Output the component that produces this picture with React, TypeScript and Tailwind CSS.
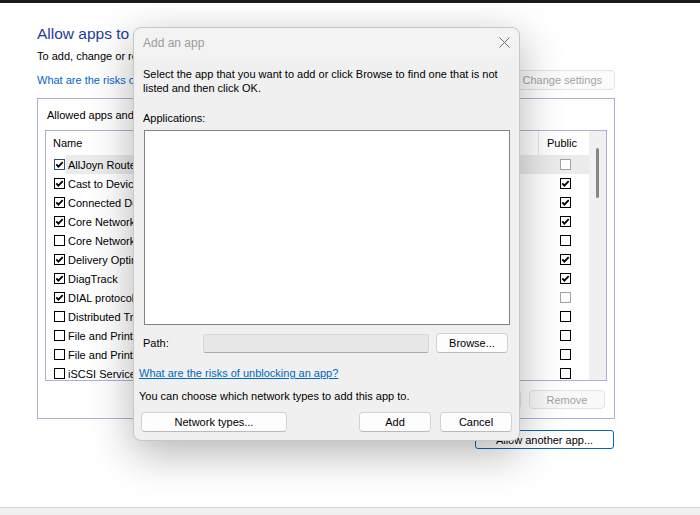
import React from "react";

type Row = { name: string; on: boolean; priv: boolean; pub: "on" | "off" | "dim" };

const rows: Row[] = [
  { name: "AllJoyn Router", on: true, priv: true, pub: "dim" },
  { name: "Cast to Device functionality", on: true, priv: true, pub: "on" },
  { name: "Connected Devices Platform", on: true, priv: true, pub: "on" },
  { name: "Core Networking", on: true, priv: true, pub: "on" },
  { name: "Core Networking Diagnostics", on: false, priv: false, pub: "off" },
  { name: "Delivery Optimization", on: true, priv: true, pub: "on" },
  { name: "DiagTrack", on: true, priv: true, pub: "on" },
  { name: "DIAL protocol server", on: true, priv: true, pub: "dim" },
  { name: "Distributed Transaction Coordinator", on: false, priv: false, pub: "off" },
  { name: "File and Printer Sharing", on: false, priv: false, pub: "off" },
  { name: "File and Printer Sharing over SMBDirect", on: false, priv: false, pub: "off" },
  { name: "iSCSI Service", on: false, priv: false, pub: "off" },
];

function Box({ on, tone = "#000" }: { on: boolean; tone?: string }) {
  return (
    <svg width="11" height="11" viewBox="0 0 11 11" className="shrink-0">
      <rect x="0.5" y="0.5" width="10" height="10" fill="#fff" stroke={tone} />
      {on && <path d="M2.3 5.4l2.1 2.3 4.3-4.6" fill="none" stroke="#000" strokeWidth="1.8" />}
    </svg>
  );
}

function Btn({ children, className = "" }: { children: React.ReactNode; className?: string }) {
  return (
    <button
      className={`flex h-[20px] items-center justify-center rounded-[4px] border border-[#d2d2d2] border-b-[#bababa] bg-[#fdfdfd] text-black ${className}`}
    >
      {children}
    </button>
  );
}

function AddAppDialog() {
  return (
    <div className="absolute left-[133px] top-[27px] flex h-[414px] w-[387px] flex-col rounded-[8px] border border-[#c6c6c6] bg-[#f0f0f0] shadow-[0_12px_44px_rgba(0,0,0,0.3)]">
      <div className="flex h-[29px] shrink-0 items-center justify-between rounded-t-[8px] bg-[#f3f3f3] px-[9px]">
        <span className="text-[12px] text-[#9c9c9c]">Add an app</span>
        <svg width="11" height="11" viewBox="0 0 11 11">
          <path d="M0.5 0.5l10 10M10.5 0.5l-10 10" stroke="#707070" strokeWidth="1" />
        </svg>
      </div>
      <div className="pt-[10px]">
        <p className="ml-[9px] w-[365px]">
          Select the app that you want to add or click Browse to find one that is not listed and then click OK.
        </p>
        <p className="ml-[9px] mt-[16px]">Applications:</p>
        <div className="ml-[10px] mt-[5px] h-[195px] w-[366px] border border-[#828282] bg-white" />
        <div className="ml-[9px] mt-[8px] flex h-[20px] items-center">
          <span className="w-[60px]">Path:</span>
          <div className="h-[19px] w-[226px] rounded-[3px] border border-[#d8d8d8] border-b-[#a9a9a9] bg-[#e7e7e7]" />
          <Btn className="ml-[7px] w-[72px]">Browse...</Btn>
        </div>
        <a className="ml-[5px] mt-[13px] block w-fit text-[#0067c0] underline">
          What are the risks of unblocking an app?
        </a>
        <p className="ml-[5px] mt-[9px]">You can choose which network types to add this app to.</p>
        <div className="mt-[9px] flex px-[7px]">
          <Btn className="w-[146px]">Network types...</Btn>
          <Btn className="ml-auto w-[72px]">Add</Btn>
          <Btn className="ml-[9px] w-[72px]">Cancel</Btn>
        </div>
      </div>
    </div>
  );
}

export default function App() {
  return (
    <div className="relative flex h-[515px] w-[700px] flex-col overflow-hidden bg-white font-['Liberation_Sans',Arial,sans-serif] text-[11px] leading-[14px] text-black">
      <div className="h-[3px] shrink-0 bg-[#1b1b1b]" />

      <div className="flex-1 pl-[37px] pr-[85px] pt-[21px]">
        <h1 className="whitespace-nowrap text-[15.5px] leading-[20px] text-[#1f3c99]">
          Allow apps to communicate through Windows Defender Firewall
        </h1>
        <p className="mt-[5px] whitespace-nowrap">
          To add, change or remove allowed apps and ports, click Change settings.
        </p>
        <div className="mt-[7px] flex h-[20px] items-center justify-between">
          <a className="whitespace-nowrap text-[#0066cc]">What are the risks of allowing an app to communicate?</a>
          <button className="flex h-[20px] items-center gap-[5px] rounded-[4px] border border-[#e3e3e3] bg-[#fbfbfb] px-[12px] text-[#a3a3a3]">
            <svg width="12" height="13" viewBox="0 0 12 13">
              <path d="M6 0.5L11 2.5V6.5C11 9.5 8.5 11.5 6 12.5C3.5 11.5 1 9.5 1 6.5V2.5Z" fill="#c9c9c9" />
            </svg>
            Change settings
          </button>
        </div>

        <div className="mt-[8px] h-[321px] border border-[#aeaedc] px-[7px] pt-[9px]">
          <p className="ml-[2px]">Allowed apps and features:</p>
          <div className="mt-[8px] flex h-[251px] overflow-hidden border border-[#aeaedc] bg-white">
            <div className="flex w-[543px] flex-col">
              <div className="grid h-[24px] shrink-0 grid-cols-[430px_63px_50px]">
                <div className="flex items-center border-r border-[#e5e5e5] pl-[7px]">Name</div>
                <div className="flex items-center border-r border-[#e5e5e5] pl-[8px]">Private</div>
                <div className="flex items-center pl-[8px]">Public</div>
              </div>
              {rows.map((r, i) => (
                <div key={r.name} className="flex h-[19px] shrink-0">
                  <div className="flex w-[20px] items-center pl-[8px]">
                    <Box on={r.on} tone={i === 0 ? "#2d4f86" : "#000"} />
                  </div>
                  <div
                    className={`grid flex-1 grid-cols-[410px_63px_50px] items-center ${i === 0 ? "bg-[#ebebeb]" : ""}`}
                  >
                    <span className="overflow-hidden whitespace-nowrap pl-[2px]">{r.name}</span>
                    <span className="flex justify-center">
                      <Box on={r.priv} />
                    </span>
                    <span className="flex justify-center pl-[3px]">
                      <Box on={r.pub === "on"} tone={r.pub === "dim" ? "#a3a3a3" : "#000"} />
                    </span>
                  </div>
                </div>
              ))}
            </div>
            <div className="w-[17px] shrink-0 bg-[#f0f0f0] pt-[17px]">
              <div className="mx-auto h-[50px] w-[3px] rounded-full bg-[#878787]" />
            </div>
          </div>
          <div className="mt-[9px] flex justify-end gap-[8px] pr-[2px]">
            <button className="h-[19px] w-[76px] rounded-[4px] border border-[#e3e3e3] bg-[#f9f9f9] text-[#a3a3a3]">
              Details...
            </button>
            <button className="h-[19px] w-[76px] rounded-[4px] border border-[#e3e3e3] bg-[#f9f9f9] text-[#a3a3a3]">
              Remove
            </button>
          </div>
        </div>

        <div className="mt-[11px] flex justify-end pr-[1px]">
          <button className="h-[19px] w-[139px] rounded-[3px] border border-[#0067c0] bg-white">
            Allow another app...
          </button>
        </div>
      </div>

      <div className="h-[8px] shrink-0 border-t border-[#d6d6d6] bg-[#f0f0f0]" />

      <AddAppDialog />
    </div>
  );
}
